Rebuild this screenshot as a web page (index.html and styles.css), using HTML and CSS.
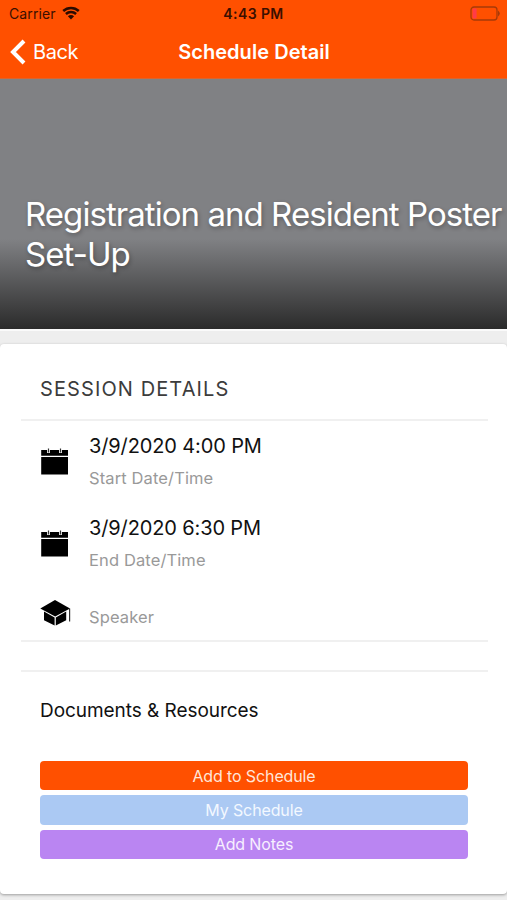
FILE: index.html
```
<!DOCTYPE html>
<html lang="en">
<head>
    <meta charset="UTF-8">
    <meta name="viewport" content="width=device-width, initial-scale=1.0">
    <title>Schedule Detail</title>
    <link rel="stylesheet" href="styles.css">
</head>
<body>

    <header class="top-bar">
        <div class="status-bar">
            <div class="carrier">
                <span>Carrier</span>
                <svg class="wifi" viewBox="0 0 18 14">
                    <path d="M1.2 5 A11.5 11.5 0 0 1 16.8 5" />
                    <path d="M3.9 8 A7.6 7.6 0 0 1 14.1 8" />
                    <path class="dot" d="M9 13.6 L5.9 10.3 A4.6 4.6 0 0 1 12.1 10.3 Z" />
                </svg>
            </div>
            <span class="clock">4:43 PM</span>
            <svg class="battery" viewBox="0 0 31 15">
                <rect class="level" x="2.6" y="2.6" width="4" height="9.8" rx="1" />
                <rect class="shell" x="1" y="1" width="26" height="13" rx="3" />
                <path class="tip" d="M28 4.6 Q31.6 7.5 28 10.4 Z" />
            </svg>
        </div>
        <nav class="nav-bar">
            <a class="back" href="#">
                <svg class="chevron" viewBox="0 0 16 26"><path d="M14 2 L3 13 L14 24" /></svg>
                <span>Back</span>
            </a>
            <span class="nav-title">Schedule Detail</span>
        </nav>
    </header>

    <section class="hero">
        <h1>Registration and Resident Poster Set-Up</h1>
    </section>

    <main class="card">
        <h2 class="card-title">Session Details</h2>

        <div class="details">
            <div class="row">
                <svg class="icon" viewBox="0 0 32 32">
                    <path d="M1.2 4 H28 V9.8 H1.2 Z M1.2 11 H28 V28.6 H1.2 Z" />
                    <path class="gap" d="M8.5 3 V7 M20.5 3 V7" />
                    <path class="ring" d="M8.5 2.6 V6.6 M20.5 2.6 V6.6" />
                </svg>
                <div>
                    <div class="value">3/9/2020 4:00 PM</div>
                    <div class="label">Start Date/Time</div>
                </div>
            </div>
            <div class="row">
                <svg class="icon" viewBox="0 0 32 32">
                    <path d="M1.2 4 H28 V9.8 H1.2 Z M1.2 11 H28 V28.6 H1.2 Z" />
                    <path class="gap" d="M8.5 3 V7 M20.5 3 V7" />
                    <path class="ring" d="M8.5 2.6 V6.6 M20.5 2.6 V6.6" />
                </svg>
                <div>
                    <div class="value">3/9/2020 6:30 PM</div>
                    <div class="label">End Date/Time</div>
                </div>
            </div>
            <div class="row speaker">
                <svg class="icon" viewBox="0 0 32 32">
                    <path d="M0.3 11.5 L15 3 L30 11.5 L15.2 19.4 Z" />
                    <path d="M4 14.6 L14.6 20.4 V28.6 L4 23.3 Z M15.8 20.4 L26.2 14.6 V23.3 L15.8 28.6 Z" />
                    <path class="tassel" d="M29.6 11.5 V24.5" />
                </svg>
                <div class="label">Speaker</div>
            </div>
        </div>

        <div class="spacer"></div>

        <h3 class="documents">Documents &amp; Resources</h3>

        <div class="buttons">
            <button class="btn btn-add">Add to Schedule</button>
            <button class="btn btn-mine">My Schedule</button>
            <button class="btn btn-notes">Add Notes</button>
        </div>
    </main>

</body>
</html>
```
FILE: styles.css
```
* { box-sizing: border-box; font-family: 'Inter', 'Liberation Sans', sans-serif; }
body { margin: 0; height: 900px; background-color: #eeeeee; overflow: hidden; }
h1, h2, h3 { margin: 0; font-weight: 400; }
svg { display: block; flex: none; }

/* status + navigation */
.top-bar { height: 79px; background-color: #ff5000; border-bottom: 1px solid #d9652f; }
.status-bar { display: grid; grid-template-columns: 1fr auto 1fr; align-items: center; height: 27px; padding: 0 6px 0 9px; color: #3a0f00; }
.carrier { display: flex; align-items: center; gap: 6px; font-size: 14px; line-height: 27px; letter-spacing: 0.1px; }
.wifi { width: 18px; height: 14px; margin-top: -2px; fill: none; stroke: #2b0b00; stroke-width: 2.5; }
.wifi .dot { fill: #2b0b00; stroke: none; }
.clock { font-size: 14px; font-weight: 600; letter-spacing: 0.4px; margin-right: 3px; }
.battery { width: 31px; height: 15px; justify-self: end; margin-top: -1px; }
.battery .shell { fill: none; stroke: #a63a08; stroke-width: 1.3; }
.battery .tip { fill: #a63a08; }
.battery .level { fill: #ff3b48; }
.nav-bar { display: grid; grid-template-columns: 1fr auto 1fr; align-items: center; height: 50px; padding: 0 9px 0 10px; color: #fff; }
.back { display: flex; align-items: center; gap: 7px; margin-top: -1px; color: #fff; font-size: 20px; letter-spacing: -0.4px; text-decoration: none; }
.chevron { width: 16px; height: 26px; fill: none; stroke: #fff; stroke-width: 4; }
.nav-title { font-size: 20px; font-weight: 600; letter-spacing: 0.05px; }

/* session banner */
.hero { height: 252px; padding: 115px 0 0 25px; border-bottom: 2px solid #fafafa; background: linear-gradient(#808184 0, #808184 160px, #2b2b2b 250px); background-clip: padding-box; }
.hero h1 { color: #fff; font-size: 33px; line-height: 40px; letter-spacing: -0.95px; text-shadow: 1px 2px 4px rgba(0, 0, 0, 0.3); }

.card { height: 550px; margin-top: 13px; padding: 0 19px 0 21px; background: #fff; border-radius: 4px; box-shadow: 0 1px 3px rgba(0, 0, 0, 0.35); }
.card-title { height: 77px; padding-left: 19px; border-bottom: 2px solid #f0f0f0; color: #3c3c3c; font-size: 20px; line-height: 90px; letter-spacing: 1.1px; text-transform: uppercase; }

.details { height: 221px; border-bottom: 2px solid #f0f0f0; }
.row { display: flex; align-items: center; height: 82px; padding-left: 19px; gap: 17px; }
.row.speaker { height: 56px; }
.row.speaker .label { padding-top: 8px; }
.icon { width: 32px; height: 32px; fill: #000; }
.icon .gap { stroke: #fff; stroke-width: 2.8; }
.icon .ring { stroke: #333; stroke-width: 1.2; }
.icon .tassel { stroke: #333; stroke-width: 1.2; }
.value { color: #111; font-size: 20px; line-height: 32px; letter-spacing: -0.13px; }
.label { color: #999; font-size: 16.5px; line-height: 32px; letter-spacing: 0.12px; }

.spacer { height: 30px; border-bottom: 2px solid #f0f0f0; }
.documents { height: 89px; padding-left: 19px; color: #111; font-size: 19px; line-height: 78px; letter-spacing: -0.05px; }

.buttons { display: flex; flex-direction: column; gap: 5px; padding: 0 20px 0 19px; }
.btn { height: 29.3px; padding: 0; border: none; border-radius: 4px; color: #fff; font-size: 16px; line-height: 28px; letter-spacing: -0.12px; cursor: pointer; }
.btn-add { background-color: #ff5000; color: #ffe6da; }
.btn-mine { background-color: #abc9f3; color: #f3f8ff; }
.btn-notes { background-color: #ba85f2; color: #f7efff; }
```
